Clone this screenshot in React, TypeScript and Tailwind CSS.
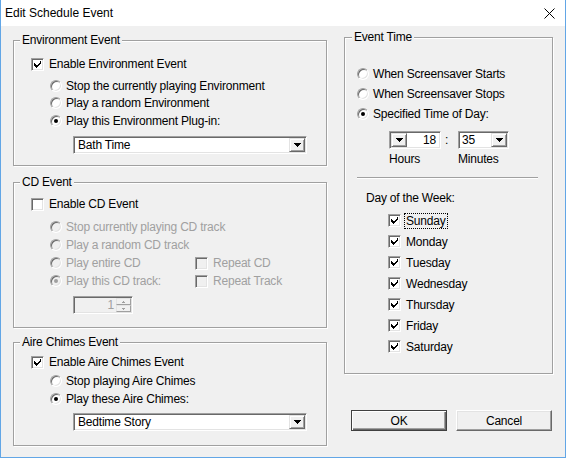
import React from "react";

const sunken =
  "border border-t-[#a0a0a0] border-l-[#a0a0a0] border-b-white border-r-white shadow-[inset_1px_1px_0_#696969,inset_-1px_-1px_0_#e3e3e3]";

function CheckMark({ color }: { color: string }) {
  return (
    <svg width="7" height="7" viewBox="0 0 7 7" className="absolute left-[2px] top-[2px]" shapeRendering="crispEdges">
      <path d="M0 2h1v1h-1zM0 3h2v1h-2zM0 4h3v1h-3zM1 5h3v1h-3zM2 6h1v1h-1zM3 4h2v1h-2zM4 3h2v1h-2zM5 2h2v1h-2zM6 0h1v2h-1z" fill={color} />
    </svg>
  );
}

function Check({ checked, disabled }: { checked?: boolean; disabled?: boolean }) {
  return (
    <span
      className={`relative block w-[13px] h-[13px] shrink-0 border border-t-[#a0a0a0] border-l-[#a0a0a0] border-b-white border-r-white shadow-[inset_1px_1px_0_#696969,inset_-1px_-1px_0_#e3e3e3] ${
        disabled ? "bg-[#f0f0f0]" : "bg-white"
      }`}
    >
      {checked && <CheckMark color={disabled ? "#a0a0a0" : "#000"} />}
    </span>
  );
}

function Radio({ checked, disabled }: { checked?: boolean; disabled?: boolean }) {
  return (
    <span
      className={`relative flex items-center justify-center w-[12px] h-[12px] shrink-0 rounded-full border border-t-[#a0a0a0] border-l-[#a0a0a0] border-b-white border-r-white shadow-[inset_1px_1px_0_#696969,inset_-1px_-1px_0_#e3e3e3] ${
        disabled ? "bg-[#f0f0f0]" : "bg-white"
      }`}
    >
      {checked && (
        <span className={`block w-[4px] h-[4px] rounded-full ${disabled ? "bg-[#a0a0a0]" : "bg-black"}`} />
      )}
    </span>
  );
}

function ArrowBtn() {
  return (
    <span className="flex items-center justify-center w-[16px] h-full shrink-0 bg-[#f0f0f0] border border-t-[#e3e3e3] border-l-[#e3e3e3] border-b-[#696969] border-r-[#696969] shadow-[inset_1px_1px_0_#fff,inset_-1px_-1px_0_#a0a0a0]">
      <svg width="7" height="4" viewBox="0 0 7 4" shapeRendering="crispEdges">
        <path d="M0 0h7v1h-7zM1 1h5v1h-5zM2 2h3v1h-3zM3 3h1v1h-1z" fill="#000" />
      </svg>
    </span>
  );
}

function Combo({ value, className }: { value: string; className: string }) {
  return (
    <div className={`${sunken} ${className} h-[18px] bg-white flex p-[1px]`}>
      <span className="flex-1 pl-[3px] leading-[14px]">{value}</span>
      <ArrowBtn />
    </div>
  );
}

function Group({
  title,
  className,
  legendClass,
  children,
}: {
  title: string;
  className: string;
  legendClass: string;
  children: React.ReactNode;
}) {
  return (
    <fieldset
      className={`border border-[#a0a0a0] shadow-[1px_1px_0_#fff,inset_1px_1px_0_#fff] ${className}`}
    >
      <legend className={`px-[2px] leading-[14px] bg-[#f0f0f0] ${legendClass}`}>{title}</legend>
      {children}
    </fieldset>
  );
}

function CheckRow({
  label,
  checked,
  disabled,
  className = "",
}: {
  label: string;
  checked?: boolean;
  disabled?: boolean;
  className?: string;
}) {
  return (
    <div className={`flex items-center gap-[5px] h-[18px] ${className}`}>
      <Check checked={checked} disabled={disabled} />
      <span className={disabled ? "text-[#a0a0a0]" : ""}>{label}</span>
    </div>
  );
}

function RadioRow({
  label,
  checked,
  disabled,
  className = "",
}: {
  label: string;
  checked?: boolean;
  disabled?: boolean;
  className?: string;
}) {
  return (
    <div className={`flex items-center gap-[4px] ${className}`}>
      <Radio checked={checked} disabled={disabled} />
      <span className={disabled ? "text-[#a0a0a0]" : ""}>{label}</span>
    </div>
  );
}

export default function App() {
  const days = ["Sunday", "Monday", "Tuesday", "Wednesday", "Thursday", "Friday", "Saturday"];
  return (
    <div className="w-[566px] h-[458px] bg-[#f0f0f0] border-x border-b border-[#62a6e6] flex flex-col font-['Liberation_Sans',Arial,sans-serif] text-[12px] tracking-[-0.2px] text-black leading-[14px] overflow-hidden">
      {/* Title bar */}
      <div className="h-[26px] bg-white flex items-center justify-between pl-[4px] pr-[10px] shrink-0">
        <span className="text-[12px] tracking-[0px]">Edit Schedule Event</span>
        <svg width="11" height="11" viewBox="0 0 11 11">
          <path d="M0.5 0.5L10.5 10.5M10.5 0.5L0.5 10.5" stroke="#000" strokeWidth="1" />
        </svg>
      </div>

      <div className="flex px-[12px] gap-[17px]">
        {/* Left column */}
        <div className="flex flex-col pt-[7px] w-[314px]">
          <Group title="Environment Event" className="h-[133px]" legendClass="ml-[6px]">
            <CheckRow label="Enable Environment Event" checked className="mt-[8px] pl-[17px]" />
            <div className="flex flex-col mt-[4px] pl-[36px]">
              <RadioRow label="Stop the currently playing Environment" className="h-[17.5px]" />
              <RadioRow label="Play a random Environment" className="h-[17.5px]" />
              <RadioRow label="Play this Environment Plug-in:" checked className="h-[17.5px]" />
            </div>
            <Combo value="Bath Time" className="mt-[6.5px] ml-[59px] w-[234px]" />
          </Group>

          <Group title="CD Event" className="mt-[9px] h-[153px]" legendClass="ml-[6px]">
            <CheckRow label="Enable CD Event" className="mt-[6px] pl-[17px]" />
            <div className="flex flex-col mt-[5px] pl-[36px]">
              <RadioRow label="Stop currently playing CD track" disabled className="h-[18px]" />
              <RadioRow label="Play a random CD track" disabled className="h-[18px]" />
              <div className="flex h-[18px]">
                <RadioRow label="Play entire CD" disabled className="w-[145px]" />
                <CheckRow label="Repeat CD" disabled />
              </div>
              <div className="flex h-[18px]">
                <RadioRow label="Play this CD track:" checked disabled className="w-[145px]" />
                <CheckRow label="Repeat Track" disabled />
              </div>
            </div>
            <div className={`${sunken} mt-[6px] ml-[59px] w-[60px] h-[18px] bg-[#f0f0f0] flex p-[1px]`}>
              <span className="flex-1 text-right pr-[2px] text-[#a0a0a0] leading-[14px]">1</span>
              <div className="flex flex-col w-[15px] h-full">
                <span className="flex-1 flex items-center justify-center border border-t-[#e3e3e3] border-l-[#e3e3e3] border-b-[#a0a0a0] border-r-[#a0a0a0]">
                  <svg width="3" height="2" viewBox="0 0 3 2"><path d="M1 0h1v1h1v1h-3v-1h1z" fill="#a0a0a0" /></svg>
                </span>
                <span className="flex-1 flex items-center justify-center border border-t-[#e3e3e3] border-l-[#e3e3e3] border-b-[#a0a0a0] border-r-[#a0a0a0]">
                  <svg width="3" height="2" viewBox="0 0 3 2"><path d="M0 0h3v1h-1v1h-1v-1h-1z" fill="#a0a0a0" /></svg>
                </span>
              </div>
            </div>
          </Group>

          <Group title="Aire Chimes Event" className="mt-[7px] h-[111px]" legendClass="ml-[6px]">
            <CheckRow label="Enable Aire Chimes Event" checked className="mt-[4px] pl-[17px]" />
            <div className="flex flex-col mt-[1.5px] pl-[36px]">
              <RadioRow label="Stop playing Aire Chimes" className="h-[17.5px]" />
              <RadioRow label="Play these Aire Chimes:" checked className="h-[17.5px]" />
            </div>
            <Combo value="Bedtime Story" className="mt-[5.5px] ml-[59px] w-[234px]" />
          </Group>
        </div>

        {/* Right column */}
        <div className="flex flex-col pt-[4px] w-[209px]">
          <Group title="Event Time" className="h-[344px]" legendClass="ml-[7px]">
            <div className="flex flex-col mt-[20px] pl-[12px]">
              <RadioRow label="When Screensaver Starts" className="h-[20px]" />
              <RadioRow label="When Screensaver Stops" className="h-[20px]" />
              <RadioRow label="Specified Time of Day:" checked className="h-[20px]" />
            </div>
            <div className="flex mt-[7px] ml-[44px] items-center">
              <div className={`${sunken} w-[52px] h-[18px] bg-white flex p-[1px]`}>
                <ArrowBtn />
                <span className="flex-1 text-right pr-[3px] leading-[14px]">18</span>
              </div>
              <span className="w-[17px] pl-[4px]">:</span>
              <div className={`${sunken} w-[51px] h-[18px] bg-white flex p-[1px]`}>
                <span className="flex-1 pl-[2px] leading-[14px]">35</span>
                <ArrowBtn />
              </div>
            </div>
            <div className="flex mt-[1px] ml-[44px] h-[18px] items-center">
              <span className="w-[69px]">Hours</span>
              <span>Minutes</span>
            </div>
            <div className="mt-[9px] ml-[12px] w-[181px] h-[1px] bg-[#a0a0a0] shadow-[0_1px_0_#fff]" />
            <div className="mt-[11px] ml-[21px] h-[18px] flex items-center">Day of the Week:</div>
            <div className="flex flex-col mt-[3px] ml-[43px]">
              {days.map((d, i) => (
                <div key={d} className="flex items-center gap-[3px] h-[21px]">
                  <Check checked />
                  <span
                    className={`px-[1px] border leading-[14px] ${
                      i === 0 ? "border-dotted border-black" : "border-transparent"
                    }`}
                  >
                    {d}
                  </span>
                </div>
              ))}
            </div>
          </Group>

          <div className="flex gap-[9px] mt-[36px] ml-[7px]">
            <button className="w-[96px] h-[21px] bg-[#f0f0f0] border border-[#404040] shadow-[inset_1px_1px_0_#fff,inset_-1px_-1px_0_#696969,inset_-2px_-2px_0_#a0a0a0]">
              OK
            </button>
            <button className="w-[96px] h-[21px] bg-[#f0f0f0] border border-t-white border-l-white border-b-[#696969] border-r-[#696969] shadow-[inset_-1px_-1px_0_#a0a0a0,inset_1px_1px_0_#e3e3e3]">
              Cancel
            </button>
          </div>
        </div>
      </div>
    </div>
  );
}
